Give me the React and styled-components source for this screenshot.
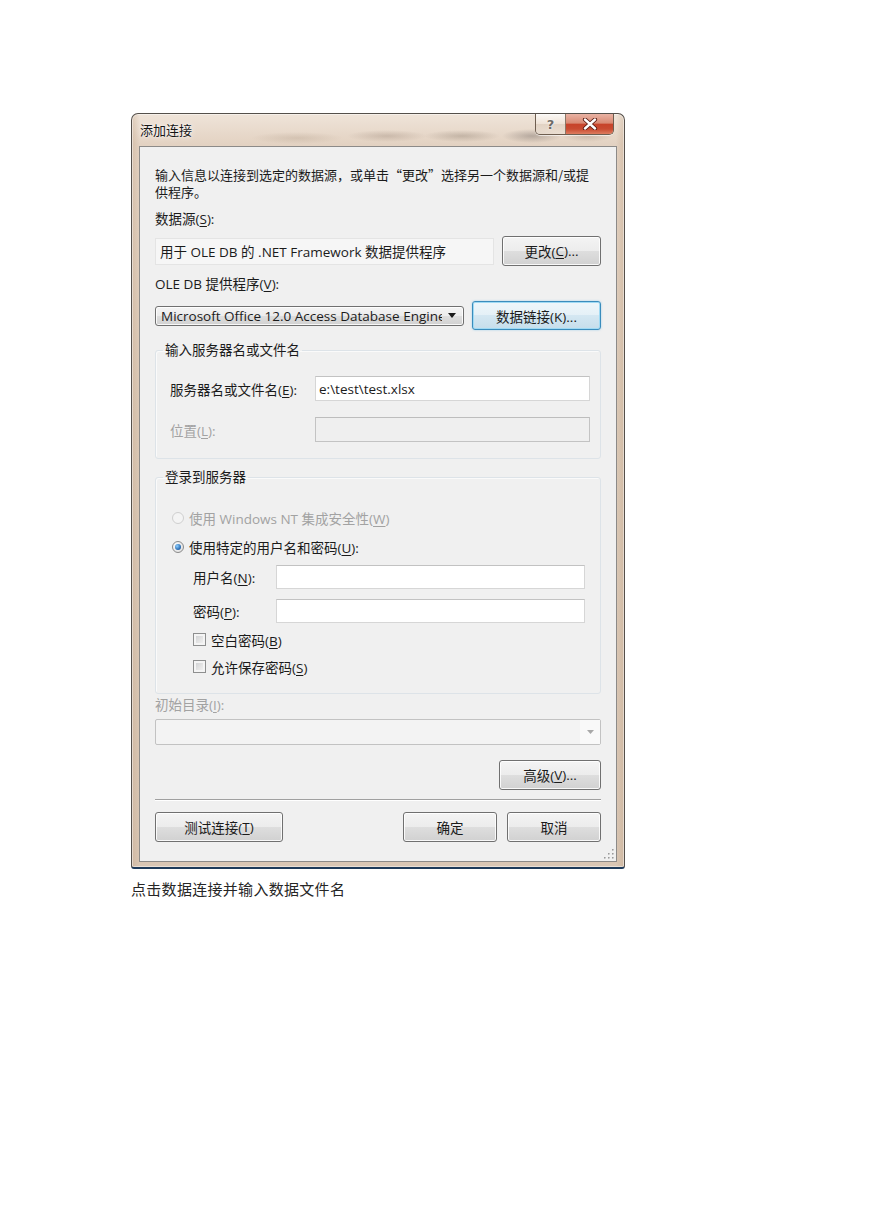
import React from "react";
import styled, { createGlobalStyle } from "styled-components";

const GlobalStyle = createGlobalStyle`
    html, body {
        margin: 0;
        padding: 0;
        background: #ffffff;
    }
    body {
        font-family: "Open Sans", "Noto Sans CJK SC", sans-serif;
    }
`;

function App() {
    return (
        <Page>
            <GlobalStyle />
            <Window>
                <TitleBar>
                    <TitleText>添加连接</TitleText>
                    <CaptionGroup>
                        <HelpBtn>?</HelpBtn>
                        <CloseBtn>
                            <svg width="16" height="12" viewBox="0 0 16 12">
                                <path
                                    d="M3 1.5 L13 10.5 M13 1.5 L3 10.5"
                                    stroke="#5b1a10"
                                    strokeWidth="4.2"
                                    strokeLinecap="round"
                                />
                                <path
                                    d="M3 1.5 L13 10.5 M13 1.5 L3 10.5"
                                    stroke="#ffffff"
                                    strokeWidth="2.4"
                                    strokeLinecap="round"
                                />
                            </svg>
                        </CloseBtn>
                    </CaptionGroup>
                </TitleBar>
                <Client>
                    <Description>
                        输入信息以连接到选定的数据源，或单击“更改”选择另一个数据源和/或提
                        <br />
                        供程序。
                    </Description>
                    <FieldLabel $gap={11}>
                        数据源(<u>S</u>):
                    </FieldLabel>
                    <ControlRow $gap={8} $h={30}>
                        <ReadOnlyBox>用于 OLE DB 的 .NET Framework 数据提供程序</ReadOnlyBox>
                        <Button $w={99} $h={30}>
                            更改(<u>C</u>)...
                        </Button>
                    </ControlRow>
                    <FieldLabel $gap={10}>
                        OLE DB 提供程序(<u>V</u>):
                    </FieldLabel>
                    <ControlRow $gap={8} $h={29}>
                        <Combo $w={309}>
                            <ComboText>Microsoft Office 12.0 Access Database Engine OLE DB Provider</ComboText>
                            <ComboArrow>
                                <svg width="8" height="5" viewBox="0 0 8 5">
                                    <polygon points="0,0 8,0 4,5" fill="#1a1a1a" />
                                </svg>
                            </ComboArrow>
                        </Combo>
                        <Button $w={129} $h={29} $focused>
                            数据链接(K)...
                        </Button>
                    </ControlRow>

                    <GroupBox $gap={12} $pad="17px 10px 16px 14px">
                        <Legend $shift={-7}>输入服务器名或文件名</Legend>
                        <FormRow>
                            <RowLabel $w={145}>
                                服务器名或文件名(<u>E</u>):
                            </RowLabel>
                            <TextInput>e:\test\test.xlsx</TextInput>
                        </FormRow>
                        <FormRow $gap={16}>
                            <RowLabel $w={145} $disabled>
                                位置(<u>L</u>):
                            </RowLabel>
                            <TextInput $disabled />
                        </FormRow>
                    </GroupBox>

                    <GroupBox $gap={10} $pad="23px 15px 18px 16px">
                        <Legend $shift={-9}>登录到服务器</Legend>
                        <OptionRow $disabled>
                            <Radio $disabled />
                            <span>
                                使用 Windows NT 集成安全性(<u>W</u>)
                            </span>
                        </OptionRow>
                        <OptionRow $gap={12}>
                            <Radio $checked />
                            <span>
                                使用特定的用户名和密码(<u>U</u>):
                            </span>
                        </OptionRow>
                        <FormRow $gap={10} $indent={21} $h={24}>
                            <RowLabel $w={83}>
                                用户名(<u>N</u>):
                            </RowLabel>
                            <TextInput />
                        </FormRow>
                        <FormRow $gap={10} $indent={21} $h={24}>
                            <RowLabel $w={83}>
                                密码(<u>P</u>):
                            </RowLabel>
                            <TextInput />
                        </FormRow>
                        <OptionRow $gap={8} $indent={21}>
                            <Checkbox />
                            <span>
                                空白密码(<u>B</u>)
                            </span>
                        </OptionRow>
                        <OptionRow $gap={10} $indent={21}>
                            <Checkbox />
                            <span>
                                允许保存密码(<u>S</u>)
                            </span>
                        </OptionRow>
                    </GroupBox>

                    <FieldLabel $gap={3} $disabled>
                        初始目录(<u>I</u>):
                    </FieldLabel>
                    <DisabledCombo>
                        <DisabledArrow>
                            <svg width="7" height="4" viewBox="0 0 7 4">
                                <polygon points="0,0 7,0 3.5,4" fill="#a8a8a8" />
                            </svg>
                        </DisabledArrow>
                    </DisabledCombo>
                    <AdvancedRow>
                        <Button $w={102} $h={30}>
                            高级(<u>V</u>)...
                        </Button>
                    </AdvancedRow>
                    <Separator />
                    <ButtonBar>
                        <Button $w={128} $h={30}>
                            测试连接(<u>T</u>)
                        </Button>
                        <Spacer />
                        <Button $w={94} $h={30}>
                            确定
                        </Button>
                        <Button $w={94} $h={30}>
                            取消
                        </Button>
                    </ButtonBar>
                    <Grip>
                        <svg width="10" height="10" viewBox="0 0 10 10">
                            {[
                                [8, 0],
                                [8, 4],
                                [4, 4],
                                [8, 8],
                                [4, 8],
                                [0, 8],
                            ].map(([x, y]) => (
                                <g key={x + "-" + y}>
                                    <rect x={x + 0.6} y={y + 0.6} width="1.6" height="1.6" fill="#ffffff" />
                                    <rect x={x} y={y} width="1.6" height="1.6" fill="#9a9a9a" />
                                </g>
                            ))}
                        </svg>
                    </Grip>
                </Client>
            </Window>
            <Caption>点击数据连接并输入数据文件名</Caption>
        </Page>
    );
}

const Page = styled.div`
    width: 869px;
    min-height: 1228px;
    box-sizing: border-box;
    padding: 113px 0 0 131px;
`;

const Window = styled.div`
    width: 494px;
    height: 756px;
    box-sizing: border-box;
    display: flex;
    flex-direction: column;
    border: 1px solid #55504b;
    border-bottom: 2px solid #1d3a5a;
    border-radius: 7px 7px 3px 3px;
    background:
        radial-gradient(ellipse 40px 6px at 255px 22px, rgba(150, 130, 115, 0.35), transparent),
        radial-gradient(ellipse 38px 6px at 330px 22px, rgba(130, 115, 100, 0.35), transparent),
        radial-gradient(ellipse 30px 7px at 400px 22px, rgba(110, 100, 95, 0.4), transparent),
        radial-gradient(ellipse 26px 6px at 455px 22px, rgba(140, 120, 105, 0.3), transparent),
        radial-gradient(ellipse 46px 6px at 165px 24px, rgba(170, 150, 130, 0.3), transparent),
        linear-gradient(90deg, rgba(190, 160, 130, 0.35) 0px, rgba(0, 0, 0, 0) 8px, rgba(0, 0, 0, 0) calc(100% - 8px), rgba(190, 160, 130, 0.35) 100%),
        linear-gradient(180deg, #efe4d9 0%, #e3d2c2 4%, #dccab8 40%, #d9c6b4 100%);
    box-shadow: inset 0 0 0 1px rgba(255, 255, 255, 0.45);
`;

const TitleBar = styled.div`
    height: 32px;
    flex-shrink: 0;
    display: flex;
    align-items: center;
    justify-content: space-between;
    padding: 0 10px 0 8px;
`;

const TitleText = styled.span`
    font-family: "Noto Sans CJK SC", sans-serif;
    font-size: 13px;
    color: #161616;
    margin-top: -2px;
    text-shadow: 0 0 6px rgba(255, 255, 255, 0.95), 0 0 2px rgba(255, 255, 255, 0.9);
`;

const CaptionGroup = styled.div`
    align-self: flex-start;
    display: flex;
    height: 20px;
    border: 1px solid #6e5e50;
    border-top: none;
    border-radius: 0 0 5px 5px;
    overflow: hidden;
    box-shadow: 0 1px 0 rgba(255, 255, 255, 0.6);
`;

const HelpBtn = styled.div`
    width: 29px;
    display: flex;
    align-items: center;
    justify-content: center;
    font-family: "DejaVu Sans", sans-serif;
    font-size: 13px;
    font-weight: bold;
    color: #6f6a66;
    text-shadow: 0 0 2px #ffffff, 0 0 1px #ffffff;
    border-right: 1px solid #8a7666;
    background: linear-gradient(180deg, rgba(255, 255, 255, 0.75) 0%, rgba(240, 228, 216, 0.7) 50%, rgba(222, 206, 190, 0.7) 51%, rgba(236, 224, 212, 0.8) 100%);
`;

const CloseBtn = styled.div`
    width: 47px;
    display: flex;
    align-items: center;
    justify-content: center;
    background: linear-gradient(180deg, #e9b3a4 0%, #d98a74 45%, #c7432a 52%, #c94b31 75%, #dd7c5f 100%);
`;

const Client = styled.div`
    position: relative;
    flex: 1;
    margin: 0 7px 5px 7px;
    padding: 0 15px;
    display: flex;
    flex-direction: column;
    background: #f0f0f0;
    border: 1px solid #8c8a88;
    font-size: 13.5px;
    color: #1b1b1b;

    u {
        text-underline-offset: 2px;
    }
`;

const Description = styled.div`
    margin-top: 19px;
    font-size: 13px;
    line-height: 17px;
    white-space: nowrap;
    font-family: "Noto Sans CJK SC", "Open Sans", sans-serif;
`;

const FieldLabel = styled.div`
    margin-top: ${(p) => p.$gap}px;
    line-height: 17px;
    color: ${(p) => (p.$disabled ? "#a2a2a2" : "#1b1b1b")};
`;

const ControlRow = styled.div`
    margin-top: ${(p) => p.$gap}px;
    height: ${(p) => p.$h}px;
    display: flex;
    align-items: center;
    justify-content: space-between;
`;

const ReadOnlyBox = styled.div`
    width: 339px;
    height: 27px;
    box-sizing: border-box;
    display: flex;
    align-items: center;
    padding-left: 4px;
    background: #f6f6f6;
    border: 1px solid #e4e4e4;
`;

const Button = styled.div`
    width: ${(p) => p.$w}px;
    height: ${(p) => p.$h}px;
    box-sizing: border-box;
    display: flex;
    align-items: center;
    justify-content: center;
    border: 1px solid ${(p) => (p.$focused ? "#3a8cbc" : "#707070")};
    border-radius: 3px;
    background: ${(p) =>
        p.$focused
            ? "linear-gradient(180deg, #eef6fa 0%, #e4f0f7 50%, #d4e7f2 50%, #c6deeb 100%)"
            : "linear-gradient(180deg, #f4f4f4 0%, #ececec 50%, #dedede 50%, #d1d1d1 100%)"};
    box-shadow: ${(p) =>
        p.$focused
            ? "inset 0 0 0 1px #9fdaf4, 0 0 2px rgba(90, 180, 230, 0.6)"
            : "inset 0 0 0 1px rgba(255, 255, 255, 0.85)"};
    color: #1b1b1b;
`;

const Combo = styled(Button)`
    justify-content: flex-start;
    padding-left: 5px;
`;

const ComboText = styled.span`
    flex: 1;
    min-width: 0;
    overflow: hidden;
    white-space: nowrap;
`;

const ComboArrow = styled.span`
    width: 20px;
    flex-shrink: 0;
    display: flex;
    align-items: center;
    justify-content: center;
    padding-right: 1px;
`;

const GroupBox = styled.fieldset`
    margin: ${(p) => p.$gap}px 0 0 0;
    padding: ${(p) => p.$pad};
    border: 1px solid #dde3e8;
    border-radius: 3px;
    box-shadow: inset 1px 1px 0 #fafafa;
    min-width: 0;
    display: flex;
    flex-direction: column;
`;

const Legend = styled.legend`
    padding: 0 2px;
    margin-left: ${(p) => p.$shift}px;
    line-height: 17px;
    color: #1b1b1b;
`;

const FormRow = styled.div`
    margin-top: ${(p) => p.$gap || 0}px;
    margin-left: ${(p) => p.$indent || 0}px;
    height: ${(p) => p.$h || 25}px;
    display: flex;
    align-items: center;
`;

const RowLabel = styled.span`
    width: ${(p) => p.$w}px;
    flex-shrink: 0;
    color: ${(p) => (p.$disabled ? "#a2a2a2" : "#1b1b1b")};
`;

const TextInput = styled.div`
    flex: 1;
    height: 100%;
    box-sizing: border-box;
    display: flex;
    align-items: center;
    padding-left: 3px;
    background: ${(p) => (p.$disabled ? "#efefef" : "#ffffff")};
    border: 1px solid ${(p) => (p.$disabled ? "#c3c3c3" : "#d6d6d6")};
    border-top-color: ${(p) => (p.$disabled ? "#bdbdbd" : "#c2c2c2")};
`;

const OptionRow = styled.div`
    margin-top: ${(p) => p.$gap || 0}px;
    margin-left: ${(p) => p.$indent || 0}px;
    height: 17px;
    display: flex;
    align-items: center;
    gap: 5px;
    color: ${(p) => (p.$disabled ? "#a2a2a2" : "#1b1b1b")};
`;

const Radio = styled.span`
    position: relative;
    width: 12px;
    height: 12px;
    box-sizing: border-box;
    border-radius: 50%;
    border: 1px solid ${(p) => (p.$disabled ? "#cfcfcf" : "#8a8a8a")};
    background: ${(p) =>
        p.$disabled
            ? "#f4f4f4"
            : "radial-gradient(circle at 35% 35%, #ffffff, #d9d9d9)"};

    &::after {
        content: "";
        display: ${(p) => (p.$checked ? "block" : "none")};
        position: absolute;
        left: 2px;
        top: 2px;
        width: 6px;
        height: 6px;
        border-radius: 50%;
        background: radial-gradient(circle at 35% 35%, #8fd0ff, #2f72b8 60%, #184a85);
    }
`;

const Checkbox = styled.span`
    width: 13px;
    height: 13px;
    box-sizing: border-box;
    border: 1px solid #8e8f8f;
    background: linear-gradient(135deg, #c9cbce 0%, #e4e4e4 55%, #f6f6f6 100%);
    box-shadow: inset 0 0 0 2px #f4f4f4;
`;

const DisabledCombo = styled.div`
    margin-top: 5px;
    height: 26px;
    box-sizing: border-box;
    display: flex;
    justify-content: flex-end;
    background: #f3f3f3;
    border: 1px solid #c2c2c2;
    border-radius: 2px;
`;

const DisabledArrow = styled.span`
    width: 20px;
    display: flex;
    align-items: center;
    justify-content: center;
    background: #f9f9f9;
`;

const AdvancedRow = styled.div`
    margin-top: 15px;
    display: flex;
    justify-content: flex-end;
`;

const Separator = styled.div`
    margin-top: 9px;
    border-top: 1px solid #a0a0a0;
    border-bottom: 1px solid #ffffff;
`;

const ButtonBar = styled.div`
    margin-top: 11px;
    display: flex;
    gap: 10px;
`;

const Spacer = styled.div`
    flex: 1;
`;

const Grip = styled.div`
    position: absolute;
    right: 2px;
    bottom: 2px;
    width: 10px;
    height: 10px;
    display: flex;
`;

const Caption = styled.div`
    margin-top: 10px;
    font-family: "Noto Sans CJK SC", sans-serif;
    font-size: 15px;
    line-height: 20px;
    letter-spacing: 0.3px;
    color: #262626;
`;

export default App;
